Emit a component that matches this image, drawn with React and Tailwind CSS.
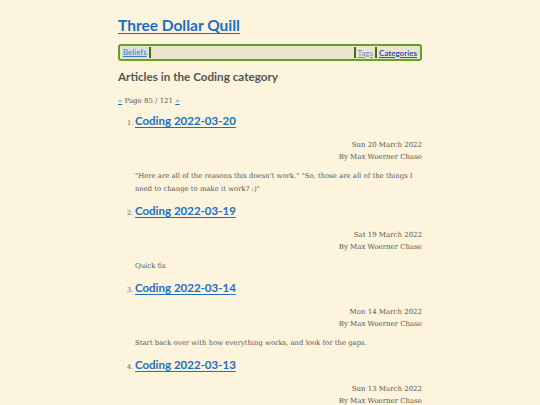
import React from 'react';

const articles = [
  {
    n: 1,
    title: 'Coding 2022-03-20',
    date: 'Sun 20 March 2022',
    summary: '"Here are all of the reasons this doesn\'t work." "So, those are all of the things I need to change to make it work? :)"',
  },
  { n: 2, title: 'Coding 2022-03-19', date: 'Sat 19 March 2022', summary: 'Quick fix' },
  {
    n: 3,
    title: 'Coding 2022-03-14',
    date: 'Mon 14 March 2022',
    summary: 'Start back over with how everything works, and look for the gaps.',
  },
  { n: 4, title: 'Coding 2022-03-13', date: 'Sun 13 March 2022', summary: '' },
];

const sans = "font-['Lato','Noto_Sans',sans-serif]";
const serif = "font-['DejaVu_Serif','Liberation_Serif',serif]";

export default function App() {
  return (
    <div className={`min-h-screen bg-[#fcf4dc] ${serif} text-[#555]`}>
      <div className="mx-auto w-[304px] pt-[13px]">
        <h1 className={`${sans} text-[15.5px] font-bold leading-[24px]`}>
          <a href="#" className="text-[#1c6fc2] underline underline-offset-2">Three Dollar Quill</a>
        </h1>

        <nav className={`${sans} mt-[7px] flex h-[17px] items-center rounded-[3px] border-2 border-[#62a026] bg-[#ebe4cf] px-[2px] text-[8px]`}>
          <a href="#" className="bg-[#d4e1e3] px-[1px] leading-[11px] text-[#3d7cbc] underline">Beliefs</a>
          <span className="mx-[1px] h-[11px] w-[2px] bg-[#3e6d16]" />
          <span className="flex-1" />
          <span className="mx-[1px] h-[11px] w-[2px] bg-[#3e6d16]" />
          <a href="#" className="px-[1px] text-[#6f8fb0] underline">Tags</a>
          <span className="mx-[1px] h-[11px] w-[2px] bg-[#3e6d16]" />
          <a href="#" className="px-[1px] font-bold text-[#1c5fa8] underline">Categories</a>
        </nav>

        <h2 className={`${sans} mt-[5px] text-[11.7px] font-bold leading-[20px] text-[#555]`}>
          Articles in the Coding category
        </h2>

        <p className="mt-[9px] text-[7px] leading-[12px] text-[#555]">
          <a href="#" className="text-[#1c6fc2] underline">«</a> Page 85 / 121{' '}
          <a href="#" className="text-[#1c6fc2] underline">»</a>
        </p>

        <ol className="mt-[5px] pl-[17px]">
          {articles.map((a) => (
            <li key={a.n} className="mb-[6px]">
              <div className="flex items-baseline">
                <span className="-ml-[8px] w-[8px] text-[6.5px] text-[#555]">{a.n}.</span>
                <a href="#" className={`${sans} text-[11.5px] font-bold leading-[18px] text-[#1c6fc2] underline underline-offset-2`}>
                  {a.title}
                </a>
              </div>
              <div className="mt-[9px] text-right text-[7px] leading-[12px] text-[#555]">
                <div>{a.date}</div>
                <div>By Max Woerner Chase</div>
              </div>
              {a.summary && (
                <p className="mt-[7px] text-[6.9px] leading-[13px] text-[#555]">{a.summary}</p>
              )}
            </li>
          ))}
        </ol>
      </div>
    </div>
  );
}
